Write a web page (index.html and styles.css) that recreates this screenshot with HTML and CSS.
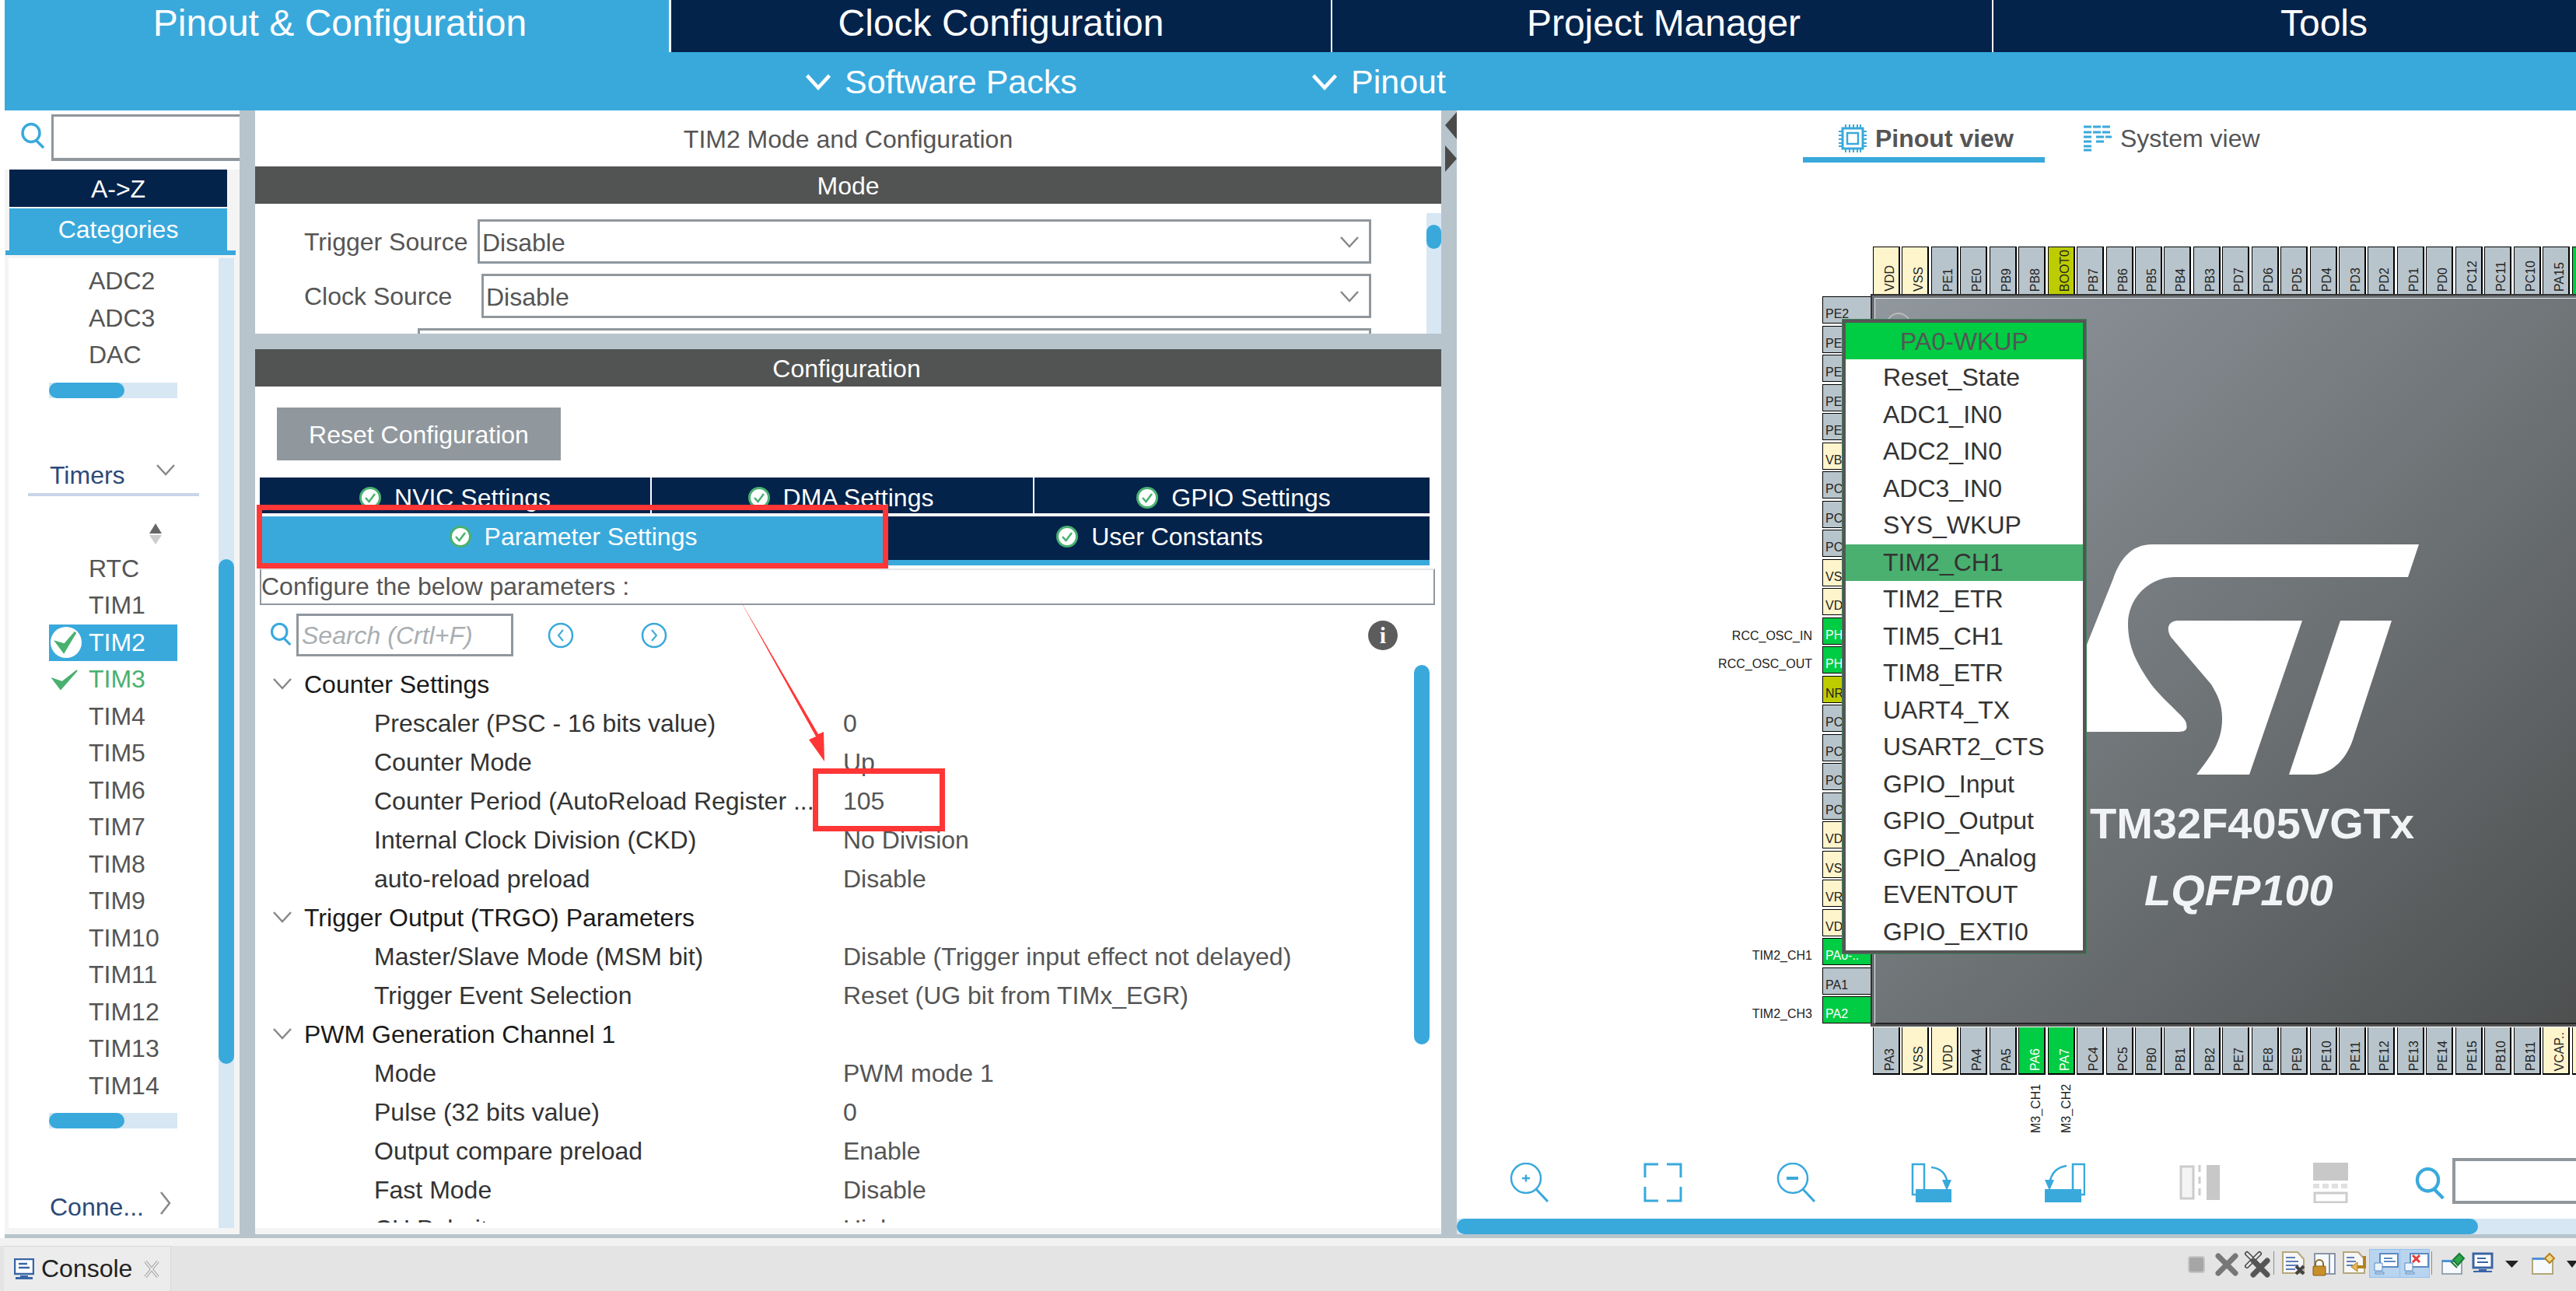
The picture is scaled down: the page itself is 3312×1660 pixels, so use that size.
FILE: index.html
```html
<!DOCTYPE html>
<html>
<head>
    <meta charset="utf-8">
    <title>TIM2 Mode and Configuration</title>
    <link rel="stylesheet" href="styles.css">
</head>
<body>
    <svg class="defs" width="0" height="0">
        <symbol id="tab-check" viewBox="0 0 28 28">
            <circle cx="14" cy="14" r="12.5" fill="#fff" stroke="#49b170" stroke-width="3"/>
            <path d="M8 14l4.500 5 7.500-10" fill="none" stroke="#49b170" stroke-width="2.500"/>
        </symbol>
        <symbol id="chev" viewBox="0 0 26 16">
            <path d="M2 2l11 12L24 2" fill="none" stroke="currentColor"/>
        </symbol>
        <symbol id="lens" viewBox="0 0 34 34">
            <ellipse cx="15" cy="14" rx="11" ry="11.500" fill="none" stroke="#39a9dc" stroke-width="3.500"/>
            <path d="M22 24l9 9" stroke="#39a9dc" stroke-width="3.500"/>
        </symbol>
    </svg>

    <div class="app">
        <nav class="top-tabs">
            <div class="top-tab active">Pinout &amp; Configuration</div>
            <div class="top-tab">Clock Configuration</div>
            <div class="top-tab">Project Manager</div>
            <div class="top-tab">Tools</div>
        </nav>
        <div class="sub-bar">
            <svg class="sub-chev"><use href="#chev"/></svg><span class="sub-packs">Software Packs</span>
            <svg class="sub-chev sub-chev-2"><use href="#chev"/></svg><span>Pinout</span>
        </div>

        <div class="main">
            <!-- left: categories -->
            <aside class="left">
                <div class="left-search">
                    <svg class="left-lens"><use href="#lens"/></svg>
                    <div class="search-box"></div>
                </div>
                <div class="btn-az">A-&gt;Z</div>
                <div class="btn-cat">Categories</div>
                <div class="cat-line"></div>
                <div class="cat-body">
                    <div class="cat-list">
                        <div class="cat-row">ADC2</div>
                        <div class="cat-row">ADC3</div>
                        <div class="cat-row">DAC</div>
                        <div class="hscroll"><div class="hscroll-thumb"></div></div>
                        <div class="group-head">Timers<svg class="group-chev"><use href="#chev"/></svg></div>
                        <div class="sort-arrows">
                            <svg width="20" height="27" viewBox="0 0 20 27"><path d="M10 0l8 13H2z" fill="#666"/><path d="M2 15h16l-8 12z" fill="#ccc"/></svg>
                        </div>
                        <div class="cat-row">RTC</div>
                        <div class="cat-row">TIM1</div>
                        <div class="cat-row selected">
                            <svg class="row-icon" width="40" height="40" viewBox="0 0 40 40"><circle cx="20" cy="20" r="20" fill="#fff"/><path d="M8 20l9 12L32 7l-14 16z" fill="#49b170" stroke="#49b170" stroke-width="3"/></svg>TIM2
                        </div>
                        <div class="cat-row done">
                            <svg class="row-icon" width="40" height="26" viewBox="0 0 40 26"><path d="M2 12l10 13L33 1 14 16z" fill="#49b170" stroke="#49b170" stroke-width="2"/></svg>TIM3
                        </div>
                        <div class="cat-row">TIM4</div>
                        <div class="cat-row">TIM5</div>
                        <div class="cat-row">TIM6</div>
                        <div class="cat-row">TIM7</div>
                        <div class="cat-row">TIM8</div>
                        <div class="cat-row">TIM9</div>
                        <div class="cat-row">TIM10</div>
                        <div class="cat-row">TIM11</div>
                        <div class="cat-row">TIM12</div>
                        <div class="cat-row">TIM13</div>
                        <div class="cat-row">TIM14</div>
                        <div class="hscroll"><div class="hscroll-thumb"></div></div>
                        <div class="group-head group-conn">Conne...<svg class="group-next" width="16" height="30" viewBox="0 0 16 30"><path d="M2 1l11 14L2 29" fill="none" stroke="#888" stroke-width="2.500"/></svg></div>
                    </div>
                    <div class="vtrack"><div class="vthumb"></div></div>
                </div>
            </aside>
            <div class="splitter"></div>

            <!-- middle: mode and configuration -->
            <section class="mid">
                <div class="mid-title">TIM2 Mode and Configuration</div>
                <div class="sec-head">Mode</div>
                <div class="mode-body">
                    <div class="mode-rows">
                        <div class="mode-row">
                            <label class="mode-label">Trigger Source</label>
                            <div class="select">Disable<svg class="select-chev"><use href="#chev"/></svg></div>
                        </div>
                        <div class="mode-row">
                            <label class="mode-label mode-label-wide">Clock Source</label>
                            <div class="select">Disable<svg class="select-chev"><use href="#chev"/></svg></div>
                        </div>
                        <div class="mode-row mode-row-last">
                            <div class="select select-cut"></div>
                        </div>
                    </div>
                    <div class="mode-track"><div class="mode-thumb"></div></div>
                </div>
                <div class="mid-gap"></div>
                <div class="sec-head sec-head-cfg">Configuration</div>
                <div class="cfg-body">
                    <div class="reset-btn">Reset Configuration</div>
                    <div class="cfg-tabs cfg-tabs-1">
                        <div class="cfg-tab tab-nvic"><svg class="tab-icon"><use href="#tab-check"/></svg>NVIC Settings</div>
                        <div class="cfg-tab tab-dma"><svg class="tab-icon"><use href="#tab-check"/></svg>DMA Settings</div>
                        <div class="cfg-tab tab-gpio"><svg class="tab-icon"><use href="#tab-check"/></svg>GPIO Settings</div>
                    </div>
                    <div class="cfg-tabs cfg-tabs-2">
                        <div class="cfg-tab tab-param active"><svg class="tab-icon"><use href="#tab-check"/></svg>Parameter Settings</div>
                        <div class="cfg-tab tab-user"><svg class="tab-icon"><use href="#tab-check"/></svg>User Constants</div>
                    </div>
                    <div class="cfg-line"></div>
                    <div class="cfg-note">Configure the below parameters :</div>
                    <div class="cfg-search">
                        <svg class="cfg-lens"><use href="#lens"/></svg>
                        <div class="cfg-input">Search (Crtl+F)</div>
                        <svg class="nav-btn" width="34" height="34" viewBox="0 0 34 34"><circle cx="17" cy="17" r="15" fill="none" stroke="#39a9dc" stroke-width="2.500"/><path d="M20 10l-6 7 6 7" fill="none" stroke="#39a9dc" stroke-width="2"/></svg>
                        <svg class="nav-btn nav-next" width="34" height="34" viewBox="0 0 34 34"><circle cx="17" cy="17" r="15" fill="none" stroke="#39a9dc" stroke-width="2.500"/><path d="M14 10l6 7-6 7" fill="none" stroke="#39a9dc" stroke-width="2"/></svg>
                        <div class="info-btn">i</div>
                    </div>
                    <div class="tree-wrap">
                        <div class="tree">
                            <div class="tree-sec"><svg class="tree-chev"><use href="#chev"/></svg>Counter Settings</div>
                            <div class="tree-row"><span class="tree-name">Prescaler (PSC - 16 bits value)</span><span class="tree-val">0</span></div>
                            <div class="tree-row"><span class="tree-name">Counter Mode</span><span class="tree-val">Up</span></div>
                            <div class="tree-row"><span class="tree-name">Counter Period (AutoReload Register ...</span><span class="tree-val">105</span></div>
                            <div class="tree-row"><span class="tree-name">Internal Clock Division (CKD)</span><span class="tree-val">No Division</span></div>
                            <div class="tree-row"><span class="tree-name">auto-reload preload</span><span class="tree-val">Disable</span></div>
                            <div class="tree-sec"><svg class="tree-chev"><use href="#chev"/></svg>Trigger Output (TRGO) Parameters</div>
                            <div class="tree-row"><span class="tree-name">Master/Slave Mode (MSM bit)</span><span class="tree-val">Disable (Trigger input effect not delayed)</span></div>
                            <div class="tree-row"><span class="tree-name">Trigger Event Selection</span><span class="tree-val">Reset (UG bit from TIMx_EGR)</span></div>
                            <div class="tree-sec"><svg class="tree-chev"><use href="#chev"/></svg>PWM Generation Channel 1</div>
                            <div class="tree-row"><span class="tree-name">Mode</span><span class="tree-val">PWM mode 1</span></div>
                            <div class="tree-row"><span class="tree-name">Pulse (32 bits value)</span><span class="tree-val">0</span></div>
                            <div class="tree-row"><span class="tree-name">Output compare preload</span><span class="tree-val">Enable</span></div>
                            <div class="tree-row"><span class="tree-name">Fast Mode</span><span class="tree-val">Disable</span></div>
                            <div class="tree-row"><span class="tree-name">CH Polarity</span><span class="tree-val">High</span></div>
                        </div>
                        <div class="tree-track"><div class="tree-thumb"></div></div>
                    </div>
                </div>
                <div class="mid-foot"></div>
            </section>
            <div class="splitter splitter-arrows">
                <svg width="20" height="80" viewBox="0 0 20 80"><path d="M5 18L20 1v35z" fill="#4a4a4a"/><path d="M5 44l15 17L5 78z" fill="#4a4a4a"/></svg>
            </div>

            <!-- right: pinout -->
            <section class="right">
                <div class="view-tabs">
                    <div class="view-tab active">
                        <svg width="36" height="36" viewBox="0 0 36 36">
                            <rect x="5" y="5" width="26" height="26" fill="#fff" stroke="#39a9dc" stroke-width="3"/>
                            <rect x="11" y="11" width="14" height="14" fill="none" stroke="#39a9dc" stroke-width="2.500"/>
                            <path d="M9 0v5M14 0v5M19 0v5M24 0v5M28 0v5M9 31v5M14 31v5M19 31v5M24 31v5M28 31v5M0 9h5M0 14h5M0 19h5M0 24h5M0 28h5M31 9h5M31 14h5M31 19h5M31 24h5M31 28h5" stroke="#39a9dc" stroke-width="2"/>
                        </svg>
                        Pinout view
                    </div>
                    <div class="view-tab">
                        <svg width="36" height="34" viewBox="0 0 36 34">
                            <path d="M0 2h36M0 9h36M0 15h12M16 15h20M0 21h12M0 27h12M0 32h12M16 21h10" stroke="#39a9dc" stroke-width="3" stroke-dasharray="10 2"/>
                        </svg>
                        System view
                    </div>
                </div>

                <div class="pins pins-top">
                    <div class="pin pin-pwr"><span>VDD</span></div><div class="pin pin-pwr"><span>VSS</span></div><div class="pin"><span>PE1</span></div><div class="pin"><span>PE0</span></div><div class="pin"><span>PB9</span></div><div class="pin"><span>PB8</span></div><div class="pin pin-boot"><span>BOOT0</span></div><div class="pin"><span>PB7</span></div><div class="pin"><span>PB6</span></div><div class="pin"><span>PB5</span></div><div class="pin"><span>PB4</span></div><div class="pin"><span>PB3</span></div><div class="pin"><span>PD7</span></div><div class="pin"><span>PD6</span></div><div class="pin"><span>PD5</span></div><div class="pin"><span>PD4</span></div><div class="pin"><span>PD3</span></div><div class="pin"><span>PD2</span></div><div class="pin"><span>PD1</span></div><div class="pin"><span>PD0</span></div><div class="pin"><span>PC12</span></div><div class="pin"><span>PC11</span></div><div class="pin"><span>PC10</span></div><div class="pin"><span>PA15</span></div><div class="pin pin-on"></div>
                </div>
                <div class="pins pins-bottom">
                    <div class="pin"><span>PA3</span></div><div class="pin pin-pwr"><span>VSS</span></div><div class="pin pin-pwr"><span>VDD</span></div><div class="pin"><span>PA4</span></div><div class="pin"><span>PA5</span></div><div class="pin pin-on"><span>PA6</span></div><div class="pin pin-on"><span>PA7</span></div><div class="pin"><span>PC4</span></div><div class="pin"><span>PC5</span></div><div class="pin"><span>PB0</span></div><div class="pin"><span>PB1</span></div><div class="pin"><span>PB2</span></div><div class="pin"><span>PE7</span></div><div class="pin"><span>PE8</span></div><div class="pin"><span>PE9</span></div><div class="pin"><span>PE10</span></div><div class="pin"><span>PE11</span></div><div class="pin"><span>PE12</span></div><div class="pin"><span>PE13</span></div><div class="pin"><span>PE14</span></div><div class="pin"><span>PE15</span></div><div class="pin"><span>PB10</span></div><div class="pin"><span>PB11</span></div><div class="pin pin-pwr"><span>VCAP..</span></div><div class="pin pin-pwr"></div>
                </div>
                <div class="pins-left">
                    <div class="lpin">PE2</div><div class="lpin">PE3</div><div class="lpin">PE4</div><div class="lpin">PE5</div><div class="lpin">PE6</div><div class="lpin pin-pwr">VBAT</div><div class="lpin">PC13</div><div class="lpin">PC14</div><div class="lpin">PC15</div><div class="lpin pin-pwr">VSS</div><div class="lpin pin-pwr">VDD</div><div class="lpin pin-on">PH0</div><div class="lpin pin-on">PH1</div><div class="lpin pin-boot">NRST</div><div class="lpin">PC0</div><div class="lpin">PC1</div><div class="lpin">PC2</div><div class="lpin">PC3</div><div class="lpin pin-pwr">VDD</div><div class="lpin pin-pwr">VSS</div><div class="lpin pin-pwr">VREF</div><div class="lpin pin-pwr">VDDA</div><div class="lpin pin-on">PA0-..</div><div class="lpin">PA1</div><div class="lpin pin-on">PA2</div>
                </div>

                <div class="sig sig-osc-in">RCC_OSC_IN</div>
                <div class="sig sig-osc-out">RCC_OSC_OUT</div>
                <div class="sig sig-ch1">TIM2_CH1</div>
                <div class="sig sig-ch3">TIM2_CH3</div>
                <div class="sig-v sig-pa6">M3_CH1</div>
                <div class="sig-v sig-pa7">M3_CH2</div>

                <div class="chip">
                    <div class="chip-face">
                        <div class="chip-dot"></div>
                        <svg class="st-logo" width="530" height="310" viewBox="2600 695 530 310">
                            <path fill="#fff" d="M2766 701H3109L3095 743H2795C2762 743 2735 770 2735 803C2735 835 2748 855 2760 874C2775 898 2812 925 2810 932C2812 940 2808 942 2800 942H2610L2650 930L2680 835L2716 745C2724 722 2738 701 2766 701Z"/>
                            <path fill="#fff" d="M2800 799H2959L2891 997H2823C2842 972 2856 955 2856 925C2856 905 2850 895 2842 881L2790 820C2783 808 2788 799 2800 799Z"/>
                            <path fill="#fff" d="M3008 799H3074L3026 946C3018 975 2998 997 2973 997H2942Z"/>
                        </svg>
                        <div class="chip-name">TM32F405VGTx</div>
                        <div class="chip-pkg">LQFP100</div>
                    </div>
                </div>

                <div class="popup">
                    <div class="popup-head">PA0-WKUP</div>
                    <div class="popup-item">Reset_State</div>
                    <div class="popup-item">ADC1_IN0</div>
                    <div class="popup-item">ADC2_IN0</div>
                    <div class="popup-item">ADC3_IN0</div>
                    <div class="popup-item">SYS_WKUP</div>
                    <div class="popup-item selected">TIM2_CH1</div>
                    <div class="popup-item">TIM2_ETR</div>
                    <div class="popup-item">TIM5_CH1</div>
                    <div class="popup-item">TIM8_ETR</div>
                    <div class="popup-item">UART4_TX</div>
                    <div class="popup-item">USART2_CTS</div>
                    <div class="popup-item">GPIO_Input</div>
                    <div class="popup-item">GPIO_Output</div>
                    <div class="popup-item">GPIO_Analog</div>
                    <div class="popup-item">EVENTOUT</div>
                    <div class="popup-item">GPIO_EXTI0</div>
                </div>

                <div class="tools">
                    <div class="tool-icons">
                        <svg width="52" height="52" viewBox="0 0 52 52"><circle cx="23" cy="20" r="19" fill="none" stroke="#39a9dc" stroke-width="2.500"/><path d="M36 34l15 16" stroke="#39a9dc" stroke-width="3"/><path d="M13 20h20M23 11v18" stroke="#39a9dc" stroke-width="5" transform="translate(11.500 10) scale(.5)"/></svg>
                        <svg width="52" height="52" viewBox="0 0 52 52"><path d="M20 2H3v17M31 2h18v17M3 31v18h17M49 31v18H31" fill="none" stroke="#39a9dc" stroke-width="3"/></svg>
                        <svg width="52" height="52" viewBox="0 0 52 52"><circle cx="21" cy="20" r="19" fill="none" stroke="#39a9dc" stroke-width="2.500"/><path d="M34 34l15 16" stroke="#39a9dc" stroke-width="3"/><path d="M13 20h15" stroke="#39a9dc" stroke-width="4"/></svg>
                        <svg width="52" height="52" viewBox="0 0 52 52"><path d="M2 2h15v39H2z" fill="none" stroke="#39a9dc" stroke-width="2.500"/><path d="M6 34h46v17H6z" fill="#39a9dc"/><path d="M26 6c12 1 19 8 21 20" fill="none" stroke="#39a9dc" stroke-width="2.500"/><path d="M40 22h12l-6 14z" fill="#39a9dc"/></svg>
                        <svg width="52" height="52" viewBox="0 0 52 52"><path d="M36 2h15v39H36z" fill="none" stroke="#39a9dc" stroke-width="2.500"/><path d="M0 34h47v17H0z" fill="#39a9dc"/><path d="M28 4C16 6 9 12 6 26" fill="none" stroke="#39a9dc" stroke-width="2.500"/><path d="M0 22h12L6 36z" fill="#39a9dc"/></svg>
                        <svg width="52" height="52" viewBox="0 0 52 52"><path d="M2 5h16v41H2z" fill="#f4f4f4" stroke="#ccc" stroke-width="3"/><path d="M26 3v44" stroke="#ccc" stroke-width="3" stroke-dasharray="9 6"/><path d="M35 3h17v45H35z" fill="#c8c8c8"/></svg>
                        <svg width="46" height="52" viewBox="0 0 46 52"><path d="M0 0h45v23H0z" fill="#c8c8c8"/><path d="M0 30h45" stroke="#e0e0e0" stroke-width="6" stroke-dasharray="8 4"/><path d="M2 39h41v12H2z" fill="#fff" stroke="#ccc" stroke-width="3"/></svg>
                    </div>
                    <div class="tool-search">
                        <svg class="tool-lens" viewBox="0 0 34 34"><use href="#lens"/></svg>
                        <div class="tool-input"></div>
                    </div>
                </div>
                <div class="right-scroll"><div class="right-thumb"></div></div>
            </section>
        </div>
        <div class="strip"></div>

        <footer class="console-bar">
            <div class="console-tab">
                <svg width="26" height="28" viewBox="0 0 26 28"><path d="M1 1h24v19H1z" fill="#fff" stroke="#3a65a5" stroke-width="2.500"/><path d="M6 7h11M6 12h14" stroke="#3a65a5" stroke-width="2.500"/><path d="M8 22h10v2h6v3H2v-3h6z" fill="#3a65a5"/></svg>
                <span class="console-name">Console</span>
                <svg class="console-close" width="20" height="22" viewBox="0 0 20 22"><path d="M2 1l16 20M18 1L2 21" stroke="#aaa" stroke-width="4"/><path d="M2 1l16 20M18 1L2 21" stroke="#f4f4f4" stroke-width="1.500"/></svg>
            </div>
            <svg class="console-tools" width="532" height="40" viewBox="2780 1604 532 40">
                <rect x="2814" y="1616" width="20" height="20" rx="3" fill="#a6a6a6" stroke="#c6c6c6" stroke-width="2"/>
                <path d="M2852 1615l22 22M2874 1615l-22 22" stroke="#777" stroke-width="7" stroke-linecap="round"/>
                <path d="M2889 1612l16 16M2905 1612l-16 16" stroke="#444" stroke-width="6" stroke-linecap="round"/>
                <path d="M2889 1612l16 16M2905 1612l-16 16" stroke="#e6e6e6" stroke-width="3" stroke-linecap="round"/>
                <path d="M2897 1621l18 18M2915 1621l-18 18" stroke="#555" stroke-width="7" stroke-linecap="round"/>
                <path d="M2923.500 1609v30" stroke="#8c8c8c"/>
                <path d="M2935 1610h19l8 9v18h-27z" fill="#f7f7f7" stroke="#b5a77a" stroke-width="2"/>
                <path d="M2939 1617h12M2939 1622h16M2939 1627h16M2939 1632h12" stroke="#5f7fb8" stroke-width="2"/>
                <path d="M2952 1628l10 10M2962 1628l-10 10" stroke="#444" stroke-width="4"/>
                <path d="M2976 1612h26v26h-26z" fill="#f6f9fd" stroke="#8a94a8" stroke-width="2"/>
                <path d="M2995 1612v26" stroke="#8a94a8" stroke-width="2"/>
                <rect x="2974" y="1628" width="16" height="12" rx="1" fill="#c8902a" stroke="#8a5a16"/>
                <path d="M2977 1628v-3a5 5 0 0 1 10 0v3" fill="none" stroke="#8a6a20" stroke-width="2"/>
                <path d="M3013 1610h19l8 9v18h-27z" fill="#f7f7f7" stroke="#b5a77a" stroke-width="2"/>
                <path d="M3017 1617h10M3017 1622h12M3017 1627h8" stroke="#5f7fb8" stroke-width="2"/>
                <path d="M3040 1615v14h-12" fill="none" stroke="#b5811f" stroke-width="4"/>
                <path d="M3023 1629l8-6v12z" fill="#e7b75a" stroke="#b5811f"/>
                <rect x="3046.500" y="1606.500" width="77" height="36" fill="#b8d4ee" stroke="#90c2f2"/>
                <path d="M3085.500 1607v35" stroke="#90c2f2"/>
                <path d="M3060 1612h23v17h-23z" fill="#fff" stroke="#5b8bc4" stroke-width="2"/>
                <path d="M3065 1618h11M3065 1622h15" stroke="#5b8bc4" stroke-width="2"/>
                <path d="M3053 1624h10v10h-10zM3054 1636h11v2h-11z" fill="#eef4fb" stroke="#5b8bc4"/>
                <path d="M3099 1612h23v17h-23z" fill="#fff" stroke="#5b8bc4" stroke-width="2"/>
                <path d="M3102 1614l9 9M3111 1614l-9 9" stroke="#e53b3b" stroke-width="3"/>
                <path d="M3092 1624h10v10h-10zM3093 1636h11v2h-11z" fill="#eef4fb" stroke="#5b8bc4"/>
                <path d="M3126.500 1609v30" stroke="#8c8c8c"/>
                <path d="M3140 1621h25v17h-25z" fill="#f6f9fd" stroke="#9aa4b0" stroke-width="2"/>
                <path d="M3140 1620h25v3h-25z" fill="#4c92d8"/>
                <path d="M3154 1620l8-8 6 6-8 9zM3151 1622l8 8" fill="#2aa84a" stroke="#1b7a33" stroke-width="2"/>
                <path d="M3180 1612h24v18h-24z" fill="#fff" stroke="#3a65a5" stroke-width="3"/>
                <path d="M3185 1618h11M3185 1623h14" stroke="#3a65a5" stroke-width="2"/>
                <path d="M3187 1632h10v2h7v2h-24v-2h7z" fill="#3a65a5"/>
                <path d="M3221 1621h17l-8.500 9z" fill="#222"/>
                <path d="M3256 1618h26v20h-26z" fill="#f6f9fd" stroke="#b5a77a" stroke-width="2"/>
                <path d="M3256 1617h18v3h-18z" fill="#4c92d8"/>
                <path d="M3278 1612l6 6-6 6-6-6z" fill="#f4d88a" stroke="#b5811f" stroke-width="2"/>
                <path d="M3300 1621h14l-7 9z" fill="#222"/>
            </svg>
        </footer>

        <!-- annotations drawn on top of the screenshot -->
        <div class="mark mark-tab"></div>
        <div class="mark mark-val"></div>
        <svg class="mark-arrow" width="120" height="215" viewBox="0 0 120 215"><path d="M0 0L99 178l-9 4 20 28-1-38-7 3z" fill="#ff3636"/></svg>
    </div>
</body>
</html>
```

FILE: styles.css
```css
* {
    margin: 0;
    padding: 0;
    box-sizing: border-box;
}

:root {
    --st-blue: #39a9dc;
    --st-navy: #03234b;
    --st-grey: #b8c4cb;
    --st-dark: #525453;
    --st-green: #00cc44;
    --st-track: #d7e7f4;
    --line: #90979d;
    --text: #555;
}

html, body {
    width: 3312px;
    height: 1660px;
    overflow: hidden;
    background: #fff;
}

body {
    font-family: "Liberation Sans", Arial, sans-serif;
    font-size: 32px;
    color: var(--text);
}

.defs {
    position: absolute;
}

.app {
    position: relative;
    width: 3312px;
    height: 1660px;
    display: flex;
    flex-direction: column;
    overflow: hidden;
}

/* header */
.top-tabs {
    display: flex;
    height: 67px;
    margin-left: 6px;
    background: var(--st-navy);
}

.top-tab {
    width: 850px;
    flex: none;
    border-right: 2px solid #fff;
    line-height: 60px;
    text-align: center;
    font-size: 48px;
    color: #fff;
}

.top-tab.active {
    width: 857px;
    background: var(--st-blue);
    border-right: 3px solid #fff;
    padding-left: 8px;
}

.top-tab:nth-child(3) {
    padding-left: 4px;
}

.top-tab:last-child {
    border-right: none;
}

.sub-bar {
    display: flex;
    align-items: center;
    height: 75px;
    margin-left: 6px;
    padding: 2px 0 0 1029px;
    background: var(--st-blue);
    color: #fff;
    font-size: 43px;
}

.sub-chev {
    width: 34px;
    height: 22px;
    margin: -2px 17px 0 0;
    color: #fff;
    stroke-width: 3.500;
}

.sub-packs {
    width: 299px;
}

.sub-chev-2 {
    margin-left: 301px;
}

/* columns */
.main {
    display: flex;
    height: 1445px;
    margin-left: 6px;
}

.splitter {
    width: 20px;
    background: var(--st-grey);
    flex: none;
}

.splitter-arrows svg {
    display: block;
    margin-top: 1px;
}

.strip {
    height: 5px;
    margin-left: 6px;
    background: var(--st-grey);
}

/* left column */
.left {
    width: 302px;
    flex: none;
    display: flex;
    flex-direction: column;
    background: #f4f4f4;
}

.left-search {
    display: flex;
    height: 76px;
    padding-top: 5px;
    background: #fff;
}

.left-lens {
    width: 34px;
    height: 34px;
    margin: 10px 6px 0 19px;
}

.search-box {
    flex: 1;
    height: 60px;
    margin-left: 1px;
    border: 3px solid var(--line);
    border-right: none;
    border-bottom-width: 4px;
}

.btn-az, .btn-cat {
    width: 280px;
    margin-left: 6px;
    text-align: center;
    color: #fff;
}

.btn-az {
    height: 48px;
    line-height: 51px;
    background: var(--st-navy);
}

.btn-cat {
    height: 56px;
    margin-top: 2px;
    line-height: 54px;
    background: var(--st-blue);
}

.cat-line {
    height: 6px;
    width: 296px;
    margin-left: 1px;
    margin-top: -2px;
    background: var(--st-blue);
}

.cat-body {
    display: flex;
    height: 1247px;
    width: 290px;
    margin-left: 5px;
    margin-top: 4px;
}

.cat-list {
    width: 270px;
    padding-top: 6px;
    background: #fff;
    overflow: hidden;
}

.cat-row {
    display: flex;
    align-items: center;
    width: 165px;
    height: 47.5px;
    margin-left: 52px;
    padding-left: 51px;
}

.cat-row.selected {
    padding-left: 2px;
    background: var(--st-blue);
    color: #fff;
}

.cat-row.done {
    padding-left: 3px;
    color: #49b170;
}

.row-icon {
    margin-right: 9px;
    flex: none;
}

.cat-row.done .row-icon {
    margin-right: 8px;
}

.hscroll {
    width: 165px;
    height: 20px;
    margin: 11px 0 0 52px;
    background: var(--st-track);
}

.hscroll-thumb {
    width: 97px;
    height: 100%;
    border-radius: 10px;
    background: var(--st-blue);
}

.group-head {
    display: flex;
    align-items: center;
    justify-content: space-between;
    width: 220px;
    height: 52px;
    margin: 74px 0 0 25px;
    padding: 4px 30px 0 28px;
    border-bottom: 4px solid #c9d5e8;
    color: #2c4a78;
}

.group-chev {
    width: 26px;
    height: 16px;
    margin-top: -16px;
    color: #888;
    stroke-width: 2.500;
}

.sort-arrows {
    height: 70px;
    padding: 33px 0 0 179px;
}

.group-conn {
    margin-top: 74px;
    height: 73px;
    padding: 0 35px 16px 28px;
    border-bottom-width: 2px;
}

.group-next {
    margin-top: -12px;
}

.vtrack {
    width: 20px;
    background: var(--st-track);
    padding-top: 387px;
}

.vthumb {
    height: 649px;
    border-radius: 10px;
    background: var(--st-blue);
}

/* middle column */
.mid {
    width: 1525px;
    flex: none;
    display: flex;
    flex-direction: column;
    background: #fff;
}

.mid-title {
    height: 72px;
    line-height: 74px;
    text-align: center;
}

.sec-head {
    height: 48px;
    line-height: 50px;
    text-align: center;
    background: var(--st-dark);
    color: #fff;
}

.sec-head-cfg {
    padding-right: 4px;
}

.mode-body {
    display: flex;
    height: 167px;
    overflow: hidden;
}

.mode-rows {
    width: 1506px;
    padding: 20px 0 0 63px;
}

.mode-row {
    display: flex;
    height: 70px;
}

.mode-label {
    width: 223px;
    flex: none;
    line-height: 58px;
}

.mode-label-wide {
    width: 228px;
}

.select {
    position: relative;
    width: 100%;
    height: 57px;
    margin-right: 71px;
    padding-left: 3px;
    border: 3px solid var(--line);
    line-height: 54px;
}

.mode-row:first-child .select {
    flex: 1;
}

.select-chev {
    position: absolute;
    top: 18px;
    right: 12px;
    width: 26px;
    height: 16px;
    color: #888;
    stroke-width: 2.500;
}

.mode-row-last {
    padding-left: 146px;
}

.mode-track {
    width: 19px;
    margin-top: 12px;
    padding-top: 15px;
    background: var(--st-track);
}

.mode-thumb {
    height: 31px;
    border-radius: 10px;
    background: var(--st-blue);
}

.mid-gap {
    height: 20px;
    background: var(--st-grey);
}

.cfg-body {
    height: 1082px;
    padding: 27px 0 0 6px;
    overflow: hidden;
}

.reset-btn {
    width: 365px;
    height: 68px;
    margin-left: 22px;
    line-height: 70px;
    text-align: center;
    background: #90979d;
    color: #fff;
}

.cfg-tabs {
    display: flex;
    width: 1504px;
    color: #fff;
    background: var(--st-navy);
}

.cfg-tabs-1 {
    height: 46px;
    margin-top: 22px;
    overflow: hidden;
}

.cfg-tabs-2 {
    height: 56px;
    margin-top: 4px;
}

.cfg-tab {
    display: flex;
    align-items: center;
    justify-content: center;
    height: 56px;
}

.cfg-tabs-1 .cfg-tab {
    border-right: 2px solid #fff;
    padding-bottom: 4px;
}

.tab-nvic {
    width: 504px;
}

.tab-dma {
    width: 492px;
    padding-right: 4px;
}

.tab-gpio {
    width: 508px;
    padding-left: 4px;
    border-right: none !important;
}

.tab-param {
    width: 806px;
}

.tab-param.active {
    background: var(--st-blue);
    padding-bottom: 4px;
}

.tab-user {
    width: 698px;
    padding: 0 0 4px 4px;
}

.tab-icon {
    width: 28px;
    height: 28px;
    margin-right: 17px;
    flex: none;
}

.cfg-line {
    width: 1504px;
    height: 7px;
    background: var(--st-blue);
}

.cfg-note {
    width: 1511px;
    height: 47px;
    margin-top: 4px;
    border: 2px solid var(--line);
    border-top-color: #e4e6e8;
    line-height: 42px;
}

.cfg-search {
    display: flex;
    align-items: center;
    width: 1504px;
    height: 55px;
    margin-top: 11px;
}

.cfg-lens {
    width: 30px;
    height: 30px;
    margin: -4px 5px 0 12px;
}

.cfg-input {
    width: 279px;
    height: 55px;
    padding-left: 4px;
    border: 3px solid var(--line);
    font-style: italic;
    line-height: 50px;
    color: #a9aeb2;
}

.nav-btn {
    margin-left: 44px;
}

.nav-next {
    margin-left: 86px;
}

.info-btn {
    width: 38px;
    height: 38px;
    margin-left: 901px;
    border-radius: 50%;
    background: #5c5c5c;
    color: #fff;
    font-size: 30px;
    font-weight: bold;
    font-family: "Liberation Serif", serif;
    line-height: 38px;
    text-align: center;
}

.tree-wrap {
    display: flex;
    width: 1504px;
    height: 717px;
    margin-top: 11px;
    overflow: hidden;
}

.tree {
    flex: 1;
}

.tree-sec {
    display: flex;
    align-items: center;
    height: 50px;
    padding-left: 16px;
    color: #1a1a1a;
}

.tree-chev {
    width: 26px;
    height: 16px;
    margin: -2px 15px 0 0;
    color: #888;
    stroke-width: 2.500;
}

.tree-row {
    display: flex;
    align-items: center;
    height: 50px;
    padding-left: 147px;
    color: #333;
}

.tree-name {
    width: 603px;
}

.tree-val {
    color: var(--text);
}

.tree-track {
    width: 20px;
}

.tree-thumb {
    height: 488px;
    border-radius: 10px;
    background: var(--st-blue);
}

.mid-foot {
    flex: 1;
    background: #f4f4f4;
}

/* right column */
.right {
    position: relative;
    flex: 1;
    overflow: hidden;
    background: #fff;
}

.view-tabs {
    display: flex;
    padding: 18px 0 0 445px;
}

.view-tab {
    display: flex;
    align-items: center;
    gap: 11px;
    height: 36px;
    color: var(--text);
    box-sizing: content-box;
}

.view-tab.active {
    width: 265px;
    padding: 0 0 6px 46px;
    margin-right: 50px;
    border-bottom: 7px solid var(--st-blue);
    font-weight: bold;
}

.view-tab svg {
    flex: none;
}

/* chip diagram, places are the content here */
.pins {
    position: absolute;
    left: 535px;
    display: flex;
    gap: 2.450px;
    font-size: 16px;
    color: #222;
}

.pins-top {
    top: 175px;
}

.pins-bottom {
    top: 1179px;
}

.pin {
    display: flex;
    justify-content: flex-end;
    align-items: flex-end;
    width: 35px;
    height: 61px;
    padding: 0 2px 3px 0;
    border: 1.500px solid #000;
    border-bottom: none;
    border-right-width: 2px;
    background: var(--st-grey);
}

.pins-bottom .pin {
    border-top: none;
    border-bottom: 2px solid #000;
}

.pin span {
    writing-mode: vertical-rl;
    transform: rotate(180deg);
    line-height: 18px;
}

.pin-pwr {
    background: #fff5cc;
}

.pin-boot {
    background: #bccc00;
}

.pin-on {
    background: var(--st-green);
    color: #fff;
}

.pins-left {
    position: absolute;
    left: 470px;
    top: 239px;
    display: flex;
    flex-direction: column;
    gap: 2.500px;
    font-size: 16px;
    color: #222;
}

.lpin {
    width: 62px;
    height: 35px;
    padding: 13px 0 0 3px;
    border: 1.500px solid #000;
    border-right: none;
    border-left-width: 1px;
    background: var(--st-grey);
    line-height: 18px;
    overflow: hidden;
}

.lpin.pin-pwr {
    background: #fff5cc;
}

.lpin.pin-boot {
    background: #bccc00;
}

.lpin.pin-on {
    background: var(--st-green);
}

.sig {
    position: absolute;
    right: 982px;
    font-size: 16px;
    line-height: 18px;
    color: #222;
}

.sig-osc-in {
    top: 667px;
}

.sig-osc-out {
    top: 703px;
}

.sig-ch1 {
    top: 1078px;
}

.sig-ch3 {
    top: 1153px;
}

.sig-v {
    position: absolute;
    top: 1255px;
    height: 60px;
    writing-mode: vertical-rl;
    transform: rotate(180deg);
    font-size: 16px;
    line-height: 18px;
    color: #222;
}

.sig-pa6 {
    left: 736px;
}

.sig-pa7 {
    left: 775px;
}

.chip {
    position: absolute;
    left: 532px;
    top: 236px;
    width: 942px;
    height: 942px;
    background: #6d7276;
    border-top: 2px solid #333;
    border-left: 2px solid #333;
    border-bottom: 5px solid #555;
}

.chip-face {
    position: relative;
    height: calc(100% - 1px);
    margin: 3px 0 0 3px;
    border-top: 1.500px solid #e8eaec;
    border-left: 1.500px solid #e8eaec;
    border-bottom: 2px solid #222;
    background: linear-gradient(135deg, #90979d 0%, #6f7477 50%, #4c4e4e 100%);
    overflow: hidden;
}

.chip-dot {
    position: absolute;
    left: 14px;
    top: 18px;
    width: 32px;
    height: 32px;
    border-radius: 50%;
    border: 2px solid #bbb;
}

.st-logo {
    position: absolute;
    left: 190px;
    top: 310px;
}

.chip-name, .chip-pkg {
    position: absolute;
    font-size: 56px;
    font-weight: bold;
    line-height: 64px;
    color: #f2f3f5;
    white-space: nowrap;
}

.chip-name {
    left: 276px;
    top: 643px;
}

.chip-pkg {
    left: 346px;
    top: 729px;
    font-style: italic;
}

.popup {
    position: absolute;
    left: 495px;
    top: 268px;
    width: 315px;
    height: 817px;
    border: 5px solid #555;
    outline: 1px solid #3f7f5c;
    outline-offset: -1px;
    background: #fff;
    color: #333;
}

.popup-head {
    height: 47px;
    line-height: 48px;
    text-align: center;
    background: var(--st-green);
    color: #555;
}

.popup-item {
    height: 47.500px;
    padding-left: 48px;
    line-height: 47px;
}

.popup-item.selected {
    background: #4ab070;
}

.tools {
    position: absolute;
    left: 0;
    right: 0;
    top: 1347px;
    display: flex;
    height: 60px;
}

.tool-icons {
    display: flex;
    gap: 120.500px;
    padding: 6px 0 0 66px;
}

.tool-search {
    display: flex;
    margin-left: auto;
}

.tool-lens {
    width: 42px;
    height: 42px;
    margin: 11px 8px 0 0;
}

.tool-input {
    width: 159px;
    height: 59px;
    border: 4px solid var(--line);
    border-right: none;
}

.right-scroll {
    position: absolute;
    left: 0;
    right: 0;
    top: 1425px;
    height: 20px;
    background: var(--st-track);
}

.right-thumb {
    width: 1313px;
    height: 100%;
    border-radius: 10px;
    background: var(--st-blue);
}

/* bottom bar */
.console-bar {
    display: flex;
    align-items: flex-start;
    justify-content: space-between;
    flex: 1;
    border-top: 10px solid #f2f2f2;
    background: #e4e4e4;
}

.console-tab {
    display: flex;
    align-items: center;
    width: 215px;
    height: 58px;
    margin-left: 5px;
    padding: 0 0 0 13px;
    border-top: 1px solid #d8d8d8;
    border-right: 1px solid #d8d8d8;
    background: #ececec;
    color: #222;
}

.console-name {
    margin: 0 15px 0 9px;
}

.console-tools {
    margin-top: 2px;
}

/* annotations */
.mark {
    position: absolute;
    border: 7px solid #ff3636;
}

.mark-tab {
    left: 330px;
    top: 649px;
    width: 812px;
    height: 82px;
}

.mark-val {
    left: 1045px;
    top: 988px;
    width: 170px;
    height: 81px;
}

.mark-arrow {
    position: absolute;
    left: 950px;
    top: 769px;
}
```
